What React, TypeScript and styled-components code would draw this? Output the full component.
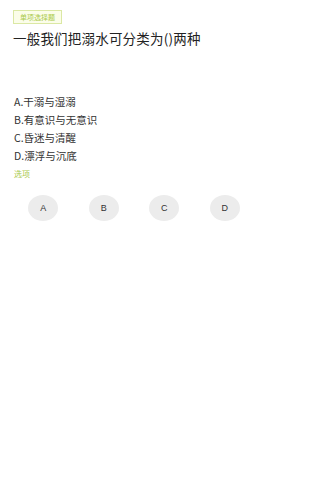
import styled, { createGlobalStyle } from 'styled-components'

const GlobalStyle = createGlobalStyle`
  html, body {
    margin: 0;
    padding: 0;
    background: #fff;
  }
  body {
    font-family: "Noto Sans CJK SC", "Liberation Sans", sans-serif;
  }
`

const Page = styled.div`
  width: 270px;
  height: 480px;
  background: #fff;
  padding: 10px 13px 0;
  box-sizing: border-box;
`

const Badge = styled.div`
  display: flex;
  width: fit-content;
  align-items: center;
  justify-content: center;
  height: 12px;
  padding: 0 6px;
  border: 1px solid #dbe8a4;
  background: #fbfde9;
  color: #a9c94a;
  font-size: 7px;
  line-height: 1;
`

const Title = styled.h1`
  margin: 6px 0 0;
  font-size: 13.5px;
  font-weight: 400;
  color: #222;
  line-height: 16px;
  letter-spacing: 0.2px;
`

const Options = styled.div`
  margin-top: 47px;
  display: flex;
  flex-direction: column;
`

const Option = styled.div`
  height: 18px;
  line-height: 18px;
  font-size: 10.5px;
  color: #333;
  padding-left: 1px;
`

const Label = styled.div`
  margin-top: 3px;
  font-size: 8px;
  line-height: 12px;
  color: #a9c94a;
  padding-left: 1px;
`

const Answers = styled.div`
  margin-top: 15px;
  display: flex;
  justify-content: space-around;
  padding: 0 2px 0 0;
`

const AnswerButton = styled.button`
  width: 30px;
  height: 26px;
  border-radius: 50%;
  border: none;
  background: #ececec;
  color: #333;
  font-family: "Liberation Sans", sans-serif;
  font-size: 9px;
  padding: 0;
`

const options = ['A.干溺与湿溺', 'B.有意识与无意识', 'C.昏迷与清醒', 'D.漂浮与沉底']

const App = () => {
  return (
    <>
      <GlobalStyle />
      <Page>
        <Badge>单项选择题</Badge>
        <Title>一般我们把溺水可分类为()两种</Title>
        <Options>
          {options.map((o) => (
            <Option key={o}>{o}</Option>
          ))}
        </Options>
        <Label>选项</Label>
        <Answers>
          {['A', 'B', 'C', 'D'].map((l) => (
            <AnswerButton key={l}>{l}</AnswerButton>
          ))}
        </Answers>
      </Page>
    </>
  )
}

export default App
